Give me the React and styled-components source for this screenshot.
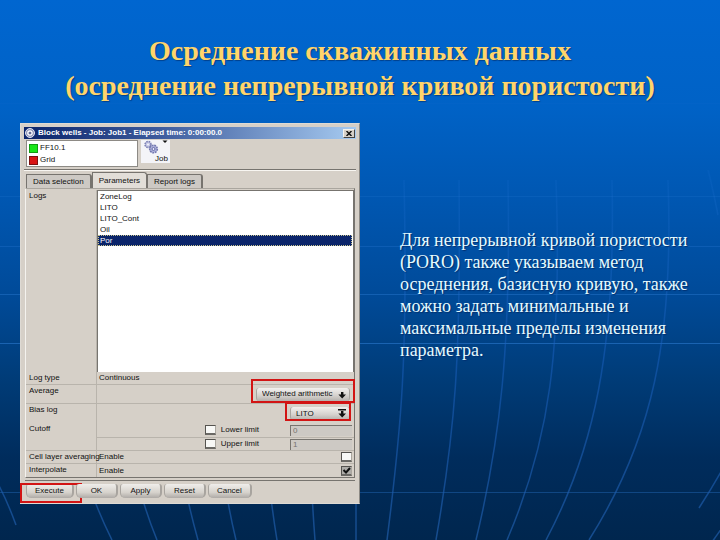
import styled, { createGlobalStyle, ThemeProvider, css } from 'styled-components';

const theme = {
    panel: '#d6d0c8',
    panelDark: '#cdc9c4',
    line: '#b9b4ac',
    shadow: '#77746f',
    navy: '#0a246a',
    red: '#d21414',
    gold: '#ffd56b',
    ui: '"Liberation Sans", Arial, sans-serif',
    text: '"Liberation Serif", "Times New Roman", serif'
};

const GlobalStyle = createGlobalStyle`
    * {
        box-sizing: border-box;
    }
    body {
        margin: 0;
        background: #002850;
    }
`;

const Slide = styled.main`
    position: relative;
    min-height: 100vh;
    padding: 33px 20px 36px;
    overflow: hidden;
    background: linear-gradient(
        #0066d0 0%,
        #0062c6 20%,
        #0056b0 38%,
        #004a98 55%,
        #003c78 70%,
        #002c5c 85%,
        #00264e 100%
    );
`;

const GridLines = styled.svg`
    position: absolute;
    top: 0;
    left: 0;
    width: 100%;
    height: 100%;
    fill: none;
`;

const Title = styled.h1`
    position: relative;
    margin: 0 0 20px;
    color: ${props => props.theme.gold};
    font: bold 28px/35px ${props => props.theme.text};
    text-align: center;
    text-shadow: 1px 1px 1px #00408c;
`;

const Content = styled.div`
    position: relative;
    display: grid;
    grid-template-columns: minmax(0, 340px) minmax(0, 1fr);
    column-gap: 40px;
    align-items: start;
`;

const Description = styled.p`
    margin: 106px 0 0;
    color: #e6fbff;
    font: 18px/22px ${props => props.theme.text};
    text-shadow: 1px 1px 1px #003070;
`;

const Dialog = styled.section`
    padding: 3px;
    background: ${props => props.theme.panel};
    border: 1px solid #dedad4;
    border-right-color: #8c8984;
    color: #111;
    font: 8px/10px ${props => props.theme.ui};
    button,
    input,
    select {
        font: inherit;
        color: inherit;
        margin: 0;
    }
`;

const TitleBar = styled.header`
    display: flex;
    align-items: center;
    gap: 3px;
    height: 12px;
    padding: 0 1px;
    background: linear-gradient(90deg, #0a246a, #3c5a9c 40%, #a6caf0);
    color: #fff;
    h2 {
        flex: 1;
        margin: 0;
        font: bold 8px/10px ${props => props.theme.ui};
        white-space: nowrap;
    }
`;

const CloseButton = styled.button`
    display: flex;
    align-items: center;
    justify-content: center;
    width: 12px;
    height: 9px;
    padding: 0;
    background: ${props => props.theme.panel};
    border: 1px solid #f4f2ee;
    border-right-color: #444;
    border-bottom-color: #444;
`;

const ToolArea = styled.div`
    display: flex;
    align-items: flex-start;
    gap: 3px;
    padding: 1px 2px 2px;
    border-bottom: 1px solid ${props => props.theme.shadow};
    box-shadow: 0 1px #f8f6f2;
`;

const WellList = styled.ul`
    width: 112px;
    height: 27px;
    margin: 0;
    padding: 1px 2px;
    list-style: none;
    background: #fff;
    border: 1px solid #8d8a85;
    li {
        display: flex;
        align-items: center;
        gap: 2px;
        height: 12px;
    }
`;

const Swatch = styled.span`
    width: 9px;
    height: 9px;
    background: ${props => props.$color};
    border: 1px solid ${props => props.$edge};
`;

const JobButton = styled.button`
    display: grid;
    grid-template-columns: 1fr auto;
    width: 29px;
    height: 23px;
    padding: 0 2px;
    background: #f4f4f8;
    border: 0;
    text-align: right;
    line-height: 8px;
    span {
        grid-column: 1 / 3;
    }
`;

const Tabs = styled.div`
    display: flex;
    align-items: flex-end;
    height: 18px;
    padding: 0 2px;
`;

const Tab = styled.button`
    height: 14px;
    padding: 0 6px;
    background: ${props => props.theme.panelDark};
    border: 1px solid ${props => props.theme.shadow};
    border-width: 1px 2px 0 1px;
    border-radius: 0 3px 0 0;
    white-space: nowrap;
    ${props =>
        props.$active &&
        css`
            height: 16px;
            background: #e2ded8;
            border-right-width: 1px;
        `}
`;

const Panel = styled.div`
    margin: 0 1px;
    padding-top: 1px;
    border: 1px solid #aaa69f;
    border-left-color: #f4f2ee;
    border-right-color: ${props => props.theme.shadow};
    border-bottom: 1px solid ${props => props.theme.shadow};
    box-shadow: 0 2px ${props => props.theme.panel}, 0 3px ${props => props.theme.shadow};
`;

const Row = styled.div`
    display: grid;
    grid-template-columns: 71px minmax(0, 1fr);
    min-height: ${props => props.$height || 13}px;
    border-bottom: ${props => (props.$open ? 0 : 1)}px solid ${props => props.theme.line};
    &:last-child {
        border-bottom: 0;
    }
`;

const Name = styled.div`
    padding: 0 3px;
    border-right: 1px solid ${props => props.theme.line};
    line-height: 11px;
    white-space: nowrap;
`;

const Value = styled.div`
    display: flex;
    align-items: center;
    justify-content: ${props => props.$align || 'space-between'};
    padding: 0 2px;
`;

const LogList = styled.ul`
    height: 182px;
    margin: 0;
    padding: 0 1px 0 0;
    list-style: none;
    background: #fff;
    border: 1px solid ${props => props.theme.shadow};
    border-width: 1px 1px 0;
`;

const LogItem = styled.li`
    height: 11px;
    padding: 0 2px;
    line-height: 11px;
    ${props =>
        props.$selected &&
        css`
            background: ${props.theme.navy};
            color: #fff;
            outline: 1px dotted #c8c48c;
            outline-offset: -1px;
        `}
`;

const markBox = css`
    &::after {
        content: '';
        position: absolute;
        inset: ${props => props.$inset};
        border: 2px solid ${props => props.theme.red};
        pointer-events: none;
    }
`;

const Picker = styled.span`
    position: relative;
    display: flex;
    width: ${props => props.$width}px;
    margin-right: 2px;
    ${markBox}
    select {
        appearance: none;
        width: 100%;
        height: 13px;
        padding: 0 16px 0 5px;
        background: linear-gradient(#f2f0ee, #d4d0cc 60%, #b4b0ac);
        border: 1px solid #a8a49f;
        border-width: 0 1px;
        border-radius: 3px;
        line-height: 12px;
    }
    svg {
        position: absolute;
        top: 1px;
        right: 2px;
        pointer-events: none;
    }
`;

const Limits = styled.div`
    display: flex;
    flex-direction: column;
`;

const Limit = styled.div`
    display: grid;
    grid-template-columns: 1fr 62px;
    align-items: center;
    column-gap: 31px;
    height: 14px;
    padding-right: 2px;
    & + & {
        height: 13px;
        border-top: 1px solid ${props => props.theme.line};
    }
    label {
        display: flex;
        align-items: center;
        justify-content: flex-end;
        gap: 5px;
    }
`;

const Check = styled.input`
    appearance: none;
    width: 11px;
    height: 10px;
    background: #f8f8f6;
    border: 1px solid #55534f;
    border-right-color: #aaa69f;
    border-bottom: 2px solid #6b6965;
    &:checked {
        background: #aeaca8
            url("data:image/svg+xml,%3Csvg xmlns='http://www.w3.org/2000/svg' viewBox='0 0 9 7'%3E%3Cpath d='M1.5 3 4 5.5 8 1' fill='none' stroke='%23111' stroke-width='2'/%3E%3C/svg%3E")
            center / 9px 7px no-repeat;
    }
`;

const LimitInput = styled.input`
    width: 100%;
    height: 11px;
    padding: 0 2px;
    background: ${props => props.theme.panelDark};
    border: 1px solid ${props => props.theme.shadow};
    border-width: 1px 0 0 1px;
    border-radius: 0;
    && {
        color: #77746f;
    }
`;

const Footer = styled.footer`
    display: flex;
    gap: 2px;
    padding: 6px 2px 2px;
`;

const ActionSlot = styled.span`
    position: relative;
    display: flex;
    ${props => props.$inset && markBox}
`;

const ActionButton = styled.button`
    min-width: 42px;
    height: 14px;
    padding: 0 8px;
    background: linear-gradient(#efedea, #d6d2cc 60%, #aeaaa6);
    border: 1px solid #a8a49f;
    border-width: 0 2px 0 1px;
    border-radius: 3px 3px 5px 5px;
    line-height: 13px;
`;

const HORIZONTALS = [
    { y: 103, opacity: 0.06 },
    { y: 196, opacity: 0.18 },
    { y: 246, opacity: 0.28 },
    { y: 294, opacity: 0.4 },
    { y: 343, opacity: 0.55 },
    { y: 492, opacity: 0.35 }
];

const CURVES = [
    'M-10 470Q4 492 16 525',
    'M52 200C52 330 62 440 112 540',
    'M108 200C108 330 120 450 157 540',
    'M160 200C160 330 170 440 198 540',
    'M210 200C210 340 214 450 236 540',
    'M258 200C258 340 262 450 277 540',
    'M307 200C307 340 308 450 315 540',
    'M356 200V540',
    'M404 180C408 360 401 430 387 540',
    'M459 180C461 360 455 430 436 540',
    'M508 180C511 350 500 440 476 540',
    'M556 180C562 350 550 440 507 540',
    'M612 180C616 350 594 450 546 540',
    'M668 180C674 340 652 440 589 540',
    'M708 170Q712 185 718 215',
    'M722 470Q712 488 699 508',
    'M722 528L712 542'
];

const wells = [
    { name: 'FF10.1', color: '#19e619', edge: '#129c12' },
    { name: 'Grid', color: '#d81414', edge: '#7c1010' }
];
const logs = ['ZoneLog', 'LITO', 'LITO_Cont', 'Oil', 'Por'];
const actions = ['Execute', 'OK', 'Apply', 'Reset', 'Cancel'];

const Background = () => (
    <GridLines viewBox="0 0 720 540" preserveAspectRatio="none" aria-hidden="true">
        <defs>
            <linearGradient id="fade" x1="0" y1="170" x2="0" y2="540" gradientUnits="userSpaceOnUse">
                <stop offset="0" stopColor="#2c7ce0" stopOpacity="0.1" />
                <stop offset="0.5" stopColor="#1a60c0" stopOpacity="0.5" />
                <stop offset="1" stopColor="#1f5ca8" stopOpacity="0.7" />
            </linearGradient>
        </defs>
        {HORIZONTALS.map(line => (
            <path key={line.y} d={`M0 ${line.y + 0.5}H720`} stroke="#2f7fd6" strokeOpacity={line.opacity} />
        ))}
        {CURVES.map(d => (
            <path key={d} d={d} stroke="url(#fade)" strokeWidth="1.5" />
        ))}
    </GridLines>
);

const AppIcon = () => (
    <svg width="10" height="10" viewBox="0 0 10 10" fill="none">
        <circle cx="5" cy="5" r="4.5" fill="#8c94b8" stroke="#e4e6f2" />
        <circle cx="5" cy="5" r="2.2" stroke="#fff" strokeWidth="1.2" />
        <circle cx="5" cy="5" r="0.8" fill="#2c3870" />
    </svg>
);

const GearsIcon = () => (
    <svg width="17" height="14" viewBox="0 0 17 14" fill="none">
        <circle cx="5" cy="4.5" r="3" fill="#c4c6e4" stroke="#7c80b4" strokeWidth="1.5" strokeDasharray="1.6 0.8" />
        <circle cx="5" cy="4.5" r="1" fill="#f4f4f8" />
        <circle cx="10.5" cy="9" r="3.8" fill="#b0b4dc" stroke="#7478b0" strokeWidth="1.6" strokeDasharray="1.8 0.8" />
        <circle cx="10.5" cy="9" r="1.5" fill="#e4e6f8" stroke="#666aa8" />
    </svg>
);

const ArrowIcon = ({ bar }) => (
    <svg width="12" height="11" viewBox="0 0 12 11">
        {bar && <path d="M2 1h8v1.5H2z" fill="#111" />}
        <path d="M5 3h2.400v2.500H10L6.200 9.500 2.400 5.500H5z" fill="#111" />
    </svg>
);

const App = () => (
    <ThemeProvider theme={theme}>
        <GlobalStyle />
        <Slide>
            <Background />
            <Title>
                Осреднение скважинных данных
                <br />
                (осреднение непрерывной кривой пористости)
            </Title>
            <Content>
                <Dialog aria-label="Block wells">
                    <TitleBar>
                        <AppIcon />
                        <h2>Block wells - Job: Job1 - Elapsed time: 0:00:00.0</h2>
                        <CloseButton aria-label="Close">
                            <svg width="6" height="5" viewBox="0 0 6 5">
                                <path d="M0.500 0 5.500 5M5.500 0 0.500 5" stroke="#111" strokeWidth="1.5" />
                            </svg>
                        </CloseButton>
                    </TitleBar>
                    <ToolArea>
                        <WellList>
                            {wells.map(well => (
                                <li key={well.name}>
                                    <Swatch $color={well.color} $edge={well.edge} />
                                    {well.name}
                                </li>
                            ))}
                        </WellList>
                        <JobButton>
                            <GearsIcon />
                            <svg width="6" height="4" viewBox="0 0 6 4">
                                <path d="M0.500 0.500h5L3 3z" fill="#111" />
                            </svg>
                            <span>Job</span>
                        </JobButton>
                    </ToolArea>
                    <Tabs role="tablist">
                        <Tab role="tab">Data selection</Tab>
                        <Tab role="tab" aria-selected="true" $active>
                            Parameters
                        </Tab>
                        <Tab role="tab">Report logs</Tab>
                    </Tabs>
                    <Panel>
                        <Row $open>
                            <Name>Logs</Name>
                            <LogList role="listbox" aria-label="Logs">
                                {logs.map(log => (
                                    <LogItem key={log} role="option" aria-selected={log === 'Por'} $selected={log === 'Por'}>
                                        {log}
                                    </LogItem>
                                ))}
                            </LogList>
                        </Row>
                        <Row>
                            <Name>Log type</Name>
                            <Value>Continuous</Value>
                        </Row>
                        <Row $height={19}>
                            <Name>Average</Name>
                            <Value $align="flex-end">
                                <Picker $width={94} $inset="-9px -5px -2px">
                                    <select aria-label="Average">
                                        <option>Weighted arithmetic</option>
                                    </select>
                                    <ArrowIcon />
                                </Picker>
                            </Value>
                        </Row>
                        <Row $height={19} $open>
                            <Name>Bias log</Name>
                            <Value $align="flex-end">
                                <Picker $width={60} $inset="-5px -1px -1px -5px">
                                    <select aria-label="Bias log">
                                        <option>LITO</option>
                                    </select>
                                    <ArrowIcon bar />
                                </Picker>
                            </Value>
                        </Row>
                        <Row $height={27}>
                            <Name>Cutoff</Name>
                            <Limits>
                                <Limit>
                                    <label>
                                        <Check type="checkbox" /> Lower limit
                                    </label>
                                    <LimitInput aria-label="Lower limit value" defaultValue="0" />
                                </Limit>
                                <Limit>
                                    <label>
                                        <Check type="checkbox" /> Upper limit
                                    </label>
                                    <LimitInput aria-label="Upper limit value" defaultValue="1" />
                                </Limit>
                            </Limits>
                        </Row>
                        <Row>
                            <Name>Cell layer averaging</Name>
                            <Value>
                                <label htmlFor="averaging">Enable</label>
                                <Check id="averaging" type="checkbox" />
                            </Value>
                        </Row>
                        <Row>
                            <Name>Interpolate</Name>
                            <Value>
                                <label htmlFor="interpolate">Enable</label>
                                <Check id="interpolate" type="checkbox" defaultChecked />
                            </Value>
                        </Row>
                    </Panel>
                    <Footer>
                        {actions.map(action => (
                            <ActionSlot key={action} $inset={action === 'Execute' && '-1px -8px -5px -6px'}>
                                <ActionButton>{action}</ActionButton>
                            </ActionSlot>
                        ))}
                    </Footer>
                </Dialog>
                <Description>
                    Для непрерывной кривой пористости (PORO) также указываем метод осреднения, базисную кривую, также
                    можно задать минимальные и максимальные пределы изменения параметра.
                </Description>
            </Content>
        </Slide>
    </ThemeProvider>
);

export default App;
